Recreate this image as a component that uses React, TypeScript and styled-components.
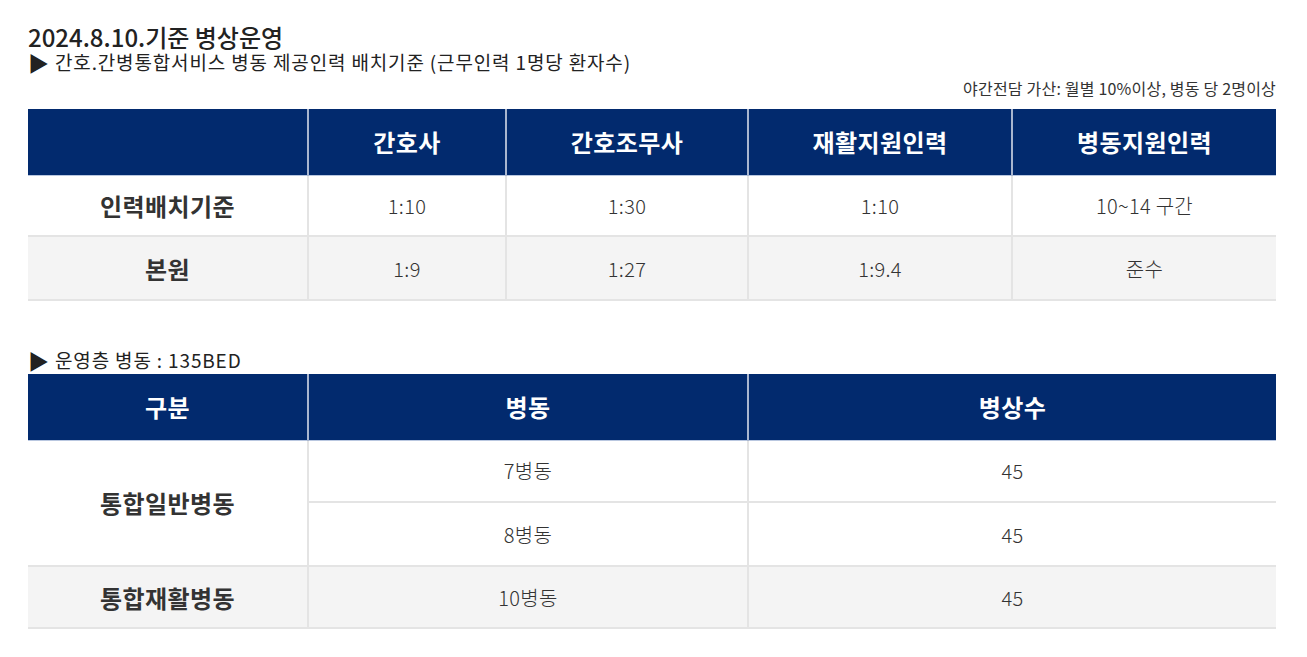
import React from "react";
import styled, { createGlobalStyle } from "styled-components";

const GlobalStyle = createGlobalStyle`
  html, body { margin: 0; padding: 0; background: #fff; }
  body { font-family: "Noto Sans CJK KR", "Noto Sans", sans-serif; color: #222; }
`;

const Page = styled.div`
  width: 1248px;
  padding: 23px 0 0 28px;
  display: flex;
  flex-direction: column;
`;

const Title = styled.h2`
  margin: 0;
  font-size: 24px;
  line-height: 28px;
  font-weight: 500;
  color: #222;
`;

const SubTitle = styled.p<{ $top?: number }>`
  margin: ${(p) => p.$top ?? 0}px 0 0;
  font-size: 19px;
  line-height: 22px;
  font-weight: 400;
  color: #222;
  letter-spacing: 0.85px;
  display: flex;
  align-items: center;
  gap: 6px;
`;

const Arrow = styled.span`
  font-size: 21px;
  line-height: 22px;
  letter-spacing: 0;
`;

const Note = styled.p`
  margin: 6px 0 0;
  text-align: right;
  font-size: 16px;
  line-height: 18px;
  color: #333;
  letter-spacing: 0.2px;
`;

const Table = styled.table<{ $top: number }>`
  margin-top: ${(p) => p.$top}px;
  width: 1248px;
  border-collapse: collapse;
  table-layout: fixed;
`;

const HeadRow = styled.tr`
  height: 66px;
  background: #022a6e;
`;

const Th = styled.th`
  color: #fff;
  font-size: 24px;
  font-weight: 700;
  letter-spacing: 0.4px;
  border-left: 2px solid #a9b6cf;
  border-bottom: 1px solid #b9c7e0;
  padding: 0;
  &:first-child { border-left: none; }
`;

const Row = styled.tr<{ $gray?: boolean; $h: number }>`
  height: ${(p) => p.$h}px;
  background: ${(p) => (p.$gray ? "#f4f4f4" : "#fff")};
`;

const LabelCell = styled.td`
  font-size: 24px;
  font-weight: 700;
  color: #333;
  text-align: center;
  letter-spacing: 0.4px;
  border-bottom: 2px solid #e4e4e4;
  padding: 0;
`;

const Td = styled.td`
  font-size: 20px;
  font-weight: 300;
  color: #333;
  text-align: center;
  border-left: 2px solid #e4e4e4;
  border-bottom: 2px solid #e4e4e4;
  padding: 0;
  letter-spacing: 0.3px;
`;

const staffCols = [280, 198, 242, 264, 264];
const wardCols = [280, 440, 528];

export default function App() {
  return (
    <>
      <GlobalStyle />
      <Page>
        <Title>2024.8.10.기준 병상운영</Title>
        <SubTitle>
          <Arrow>▶</Arrow>간호.간병통합서비스 병동 제공인력 배치기준 (근무인력 1명당 환자수)
        </SubTitle>
        <Note>야간전담 가산: 월별 10%이상, 병동 당 2명이상</Note>

        <Table $top={12}>
          <colgroup>
            {staffCols.map((w, i) => (
              <col key={i} style={{ width: w }} />
            ))}
          </colgroup>
          <thead>
            <HeadRow>
              <Th></Th>
              <Th>간호사</Th>
              <Th>간호조무사</Th>
              <Th>재활지원인력</Th>
              <Th>병동지원인력</Th>
            </HeadRow>
          </thead>
          <tbody>
            <Row $h={61}>
              <LabelCell>인력배치기준</LabelCell>
              <Td>1:10</Td>
              <Td>1:30</Td>
              <Td>1:10</Td>
              <Td>10~14 구간</Td>
            </Row>
            <Row $h={64} $gray>
              <LabelCell>본원</LabelCell>
              <Td>1:9</Td>
              <Td>1:27</Td>
              <Td>1:9.4</Td>
              <Td>준수</Td>
            </Row>
          </tbody>
        </Table>

        <SubTitle $top={48}>
          <Arrow>▶</Arrow>운영층 병동 : 135BED
        </SubTitle>

        <Table $top={3}>
          <colgroup>
            {wardCols.map((w, i) => (
              <col key={i} style={{ width: w }} />
            ))}
          </colgroup>
          <thead>
            <HeadRow>
              <Th>구분</Th>
              <Th>병동</Th>
              <Th>병상수</Th>
            </HeadRow>
          </thead>
          <tbody>
            <Row $h={62}>
              <LabelCell rowSpan={2}>통합일반병동</LabelCell>
              <Td>7병동</Td>
              <Td>45</Td>
            </Row>
            <Row $h={64}>
              <Td>8병동</Td>
              <Td>45</Td>
            </Row>
            <Row $h={62} $gray>
              <LabelCell>통합재활병동</LabelCell>
              <Td>10병동</Td>
              <Td>45</Td>
            </Row>
          </tbody>
        </Table>
      </Page>
    </>
  );
}
